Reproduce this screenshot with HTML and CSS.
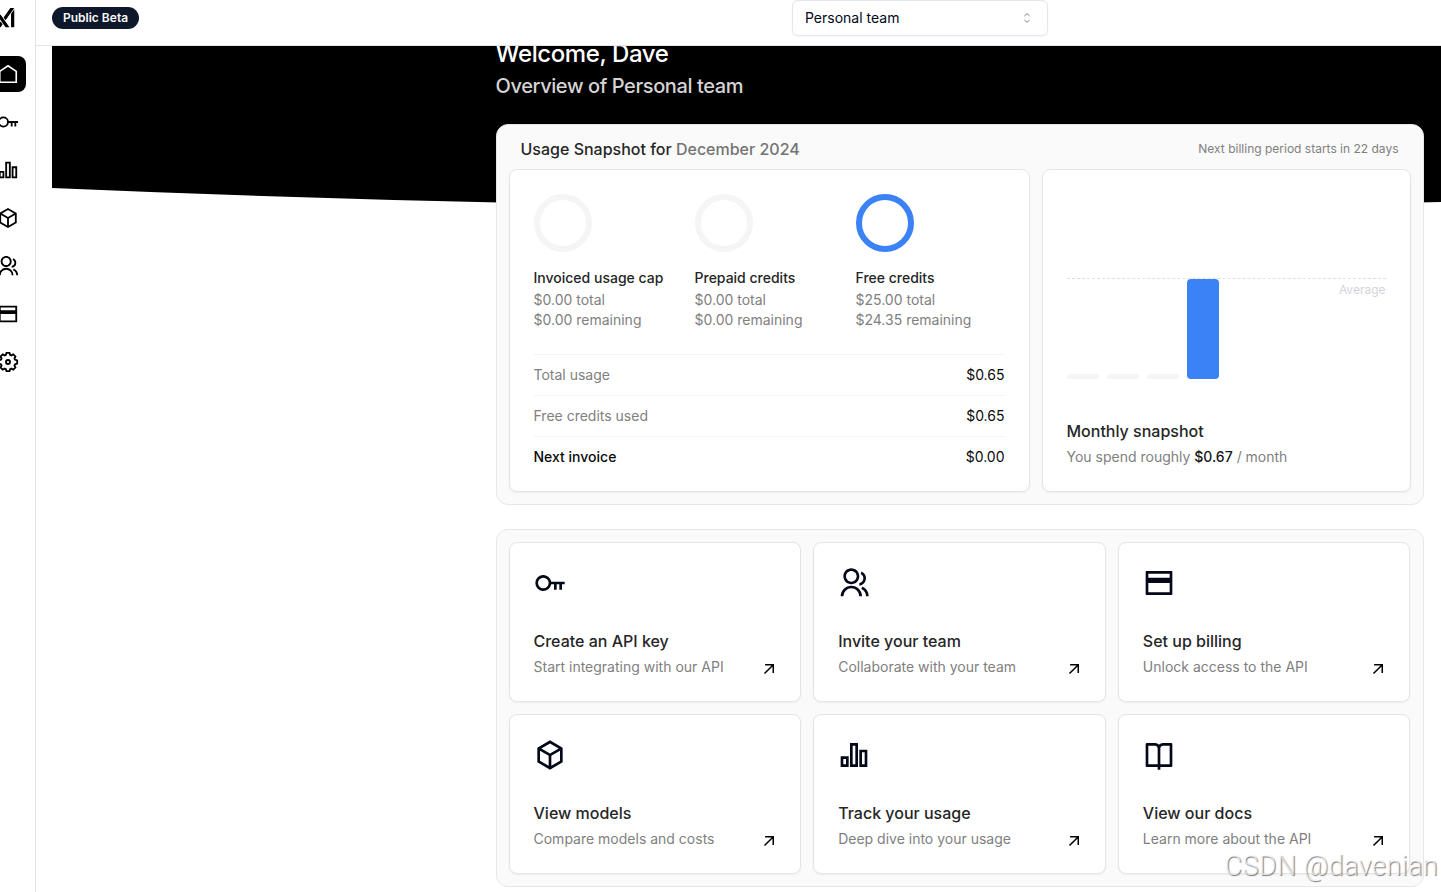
FILE: index.html
```html
<!DOCTYPE html>
<html lang="en">
<head>
  <meta charset="UTF-8">
  <meta name="viewport" content="width=device-width, initial-scale=1.0">
  <title>Console</title>
  <link rel="stylesheet" href="styles.css">
</head>
<body>
  <!-- Shared icons -->
  <svg class="icon-defs" width="0" height="0">
    <symbol id="i-home" viewBox="0 0 24 24"><path d="M12 3 21 9.2V21H3V9.2Z" fill="none" stroke="currentColor" stroke-width="1.8"/></symbol>
    <symbol id="i-key" viewBox="0 0 24 24"><path d="M12.917 13A6.002 6.002 0 0 1 1 12a6 6 0 0 1 11.917-1H23v2h-2v4h-2v-4h-2v4h-2v-4h-2.083ZM7 16a4 4 0 1 0 0-8 4 4 0 0 0 0 8Z"/></symbol>
    <symbol id="i-chart" viewBox="0 0 24 24"><path fill-rule="evenodd" d="M2 13H8V21H2V13ZM4 15V19H6V15H4ZM16 8H22V21H16V8ZM18 10V19H20V10H18ZM9 3H15V21H9V3ZM11 5V19H13V5H11Z"/></symbol>
    <symbol id="i-box" viewBox="0 0 24 24"><path fill-rule="evenodd" d="M12 1l9.5 5.5v11L12 23l-9.5-5.5v-11L12 1zM5.494 7.078L12 10.844l6.506-3.766L12 3.311 5.494 7.078zM4.5 8.813v7.534L11 20.11v-7.533L4.5 8.813zM13 20.11l6.5-3.763V8.813L13 12.577v7.533z"/></symbol>
    <symbol id="i-team" viewBox="0 0 24 24"><path d="M2 22a8 8 0 1 1 16 0h-2a6 6 0 1 0-12 0H2zm8-9c-3.315 0-6-2.685-6-6s2.685-6 6-6 6 2.685 6 6-2.685 6-6 6zm0-2c2.21 0 4-1.79 4-4s-1.79-4-4-4-4 1.79-4 4 1.79 4 4 4zm8.284 3.703A8.002 8.002 0 0 1 23 22h-2a6.001 6.001 0 0 0-3.537-5.473l.82-1.824zm-.688-11.29A5.5 5.5 0 0 1 21 8.5a5.499 5.499 0 0 1-5 5.478v-2.013a3.5 3.5 0 0 0 1.041-6.609l.555-1.943z"/></symbol>
    <symbol id="i-card" viewBox="0 0 24 24"><path fill-rule="evenodd" d="M2.6 3H21.4A.6.6 0 0 1 22 3.6V20.4A.6.6 0 0 1 21.4 21H2.6A.6.6 0 0 1 2 20.4V3.6A.6.6 0 0 1 2.6 3ZM20 12H4V19H20V12ZM20 8V5H4V8H20Z"/></symbol>
    <symbol id="i-gear" viewBox="0 0 24 24"><path d="M10.3 2h3.4l.6 2.3 1.4.6 2.1-1.3 2.4 2.5-1.2 2.1.6 1.3 2.4.8v3.4l-2.4.8-.6 1.3 1.2 2.1-2.4 2.5-2.1-1.3-1.4.6-.6 2.3h-3.4l-.6-2.3-1.4-.6-2.1 1.3-2.4-2.5L5 15.8l-.6-1.3-2.4-.8v-3.4l2.4-.8L5 8.2 3.8 6.1l2.4-2.5 2.1 1.3 1.4-.6Z" fill="none" stroke="currentColor" stroke-width="2" stroke-linejoin="round"/><circle cx="12" cy="12" r="2.2" fill="none" stroke="currentColor" stroke-width="2"/></symbol>
    <symbol id="i-book" viewBox="0 0 24 24"><path d="M13 21V23H11V21H3C2.44772 21 2 20.5523 2 20V4C2 3.44772 2.44772 3 3 3H9C10.1947 3 11.2671 3.52375 12 4.35418C12.7329 3.52375 13.8053 3 15 3H21C21.5523 3 22 3.44772 22 4V20C22 20.5523 21.5523 21 21 21H13ZM20 19V5H15C13.8954 5 13 5.89543 13 7V19H20ZM11 19V7C11 5.89543 10.1046 5 9 5H4V19H11Z"/></symbol>
    <symbol id="i-arrow" viewBox="0 0 24 24"><path d="M6.6 17.4 16.900 7.100M7.300 6.900H17.100V16.700" fill="none" stroke="currentColor" stroke-width="1.8"/></symbol>
  </svg>

  <nav class="sidebar">
    <svg class="logo" viewBox="0 0 24 24"><path d="M6.469 8.776 16.512 23h-4.464L2.005 8.776H6.47zm-.004 7.9 2.233 3.164L6.467 23H2l4.465-6.324zM22 2.582V23h-3.659V7.764L22 2.582zM22 1l-9.952 14.095-2.233-3.163L17.533 1H22z"/></svg>
    <a class="nav-item active"><svg><use href="#i-home"/></svg></a>
    <a class="nav-item"><svg><use href="#i-key"/></svg></a>
    <a class="nav-item"><svg><use href="#i-chart"/></svg></a>
    <a class="nav-item"><svg><use href="#i-box"/></svg></a>
    <a class="nav-item"><svg><use href="#i-team"/></svg></a>
    <a class="nav-item"><svg><use href="#i-card"/></svg></a>
    <a class="nav-item"><svg><use href="#i-gear"/></svg></a>
  </nav>

  <div class="page">
    <header class="topbar">
      <span class="badge">Public Beta</span>
      <button class="team-select">
        <span>Personal team</span>
        <svg viewBox="0 0 16 16"><path d="M5.4 6 8 3.7 10.6 6M5.4 10 8 12.3 10.6 10"/></svg>
      </button>
    </header>

    <main class="main">
      <svg class="hero-bg" viewBox="0 0 1816 162"><path d="M0 0H1816V142Q908 181.2 0 142Z"/></svg>

      <div class="content">
        <h1>Welcome, Dave</h1>
        <h2>Overview of Personal team</h2>

        <section class="panel usage">
          <div class="panel-head">
            <h3>Usage Snapshot for <span>December 2024</span></h3>
            <p>Next billing period starts in 22 days</p>
          </div>
          <div class="usage-cards">
            <div class="card credits">
              <div class="rings">
                <div>
                  <div class="ring"></div>
                  <h4>Invoiced usage cap</h4>
                  <p>$0.00 total</p>
                  <p>$0.00 remaining</p>
                </div>
                <div>
                  <div class="ring"></div>
                  <h4>Prepaid credits</h4>
                  <p>$0.00 total</p>
                  <p>$0.00 remaining</p>
                </div>
                <div>
                  <div class="ring full"></div>
                  <h4>Free credits</h4>
                  <p>$25.00 total</p>
                  <p>$24.35 remaining</p>
                </div>
              </div>
              <div class="row"><span>Total usage</span><span class="value">$0.65</span></div>
              <div class="row"><span>Free credits used</span><span class="value">$0.65</span></div>
              <div class="row"><b>Next invoice</b><span class="value">$0.00</span></div>
            </div>

            <div class="card monthly">
              <div class="average">Average</div>
              <div class="bars">
                <div class="bar empty"></div>
                <div class="bar empty"></div>
                <div class="bar empty"></div>
                <div class="bar" style="height: 100px"></div>
              </div>
              <h3>Monthly snapshot</h3>
              <p>You spend roughly <b>$0.67</b> / month</p>
            </div>
          </div>
        </section>

        <section class="panel links">
          <a class="card link">
            <svg class="icon"><use href="#i-key"/></svg>
            <h3>Create an API key</h3>
            <p>Start integrating with our API <svg class="arrow"><use href="#i-arrow"/></svg></p>
          </a>
          <a class="card link">
            <svg class="icon"><use href="#i-team"/></svg>
            <h3>Invite your team</h3>
            <p>Collaborate with your team <svg class="arrow"><use href="#i-arrow"/></svg></p>
          </a>
          <a class="card link">
            <svg class="icon"><use href="#i-card"/></svg>
            <h3>Set up billing</h3>
            <p>Unlock access to the API <svg class="arrow"><use href="#i-arrow"/></svg></p>
          </a>
          <a class="card link">
            <svg class="icon"><use href="#i-box"/></svg>
            <h3>View models</h3>
            <p>Compare models and costs <svg class="arrow"><use href="#i-arrow"/></svg></p>
          </a>
          <a class="card link">
            <svg class="icon"><use href="#i-chart"/></svg>
            <h3>Track your usage</h3>
            <p>Deep dive into your usage <svg class="arrow"><use href="#i-arrow"/></svg></p>
          </a>
          <a class="card link">
            <svg class="icon"><use href="#i-book"/></svg>
            <h3>View our docs</h3>
            <p>Learn more about the API <svg class="arrow"><use href="#i-arrow"/></svg></p>
          </a>
        </section>
      </div>
    </main>
  </div>

  <div class="watermark">CSDN @davenian</div>
</body>
</html>
```
FILE: styles.css
```css
* {
  box-sizing: border-box;
  margin: 0;
  padding: 0;
}

body {
  display: flex;
  height: 892px;
  overflow: hidden;
  position: relative;
  background: #fff;
  color: #020817;
  font-family: Inter, "Liberation Sans", sans-serif;
  font-size: 14px;
  line-height: 20px;
}

svg {
  display: block;
  fill: currentColor;
}

.icon-defs {
  position: absolute;
}

h1, h2, h3, h4, b {
  font-weight: 500;
}

/* Sidebar */
.sidebar {
  display: flex;
  flex-direction: column;
  align-items: flex-end;
  gap: 12px;
  flex: none;
  width: 36px;
  padding: 7px 9px 0 0;
  overflow: hidden;
  border-right: 1px solid #e5e5e5;
  color: #000;
}

.logo {
  flex: none;
  width: 21px;
  height: 21px;
  margin: 0 10px 16px 0;
}

.nav-item {
  display: flex;
  align-items: center;
  justify-content: center;
  flex: none;
  width: 36px;
  height: 36px;
  border-radius: 8px;
}

.nav-item svg {
  width: 22px;
  height: 22px;
}

.nav-item.active {
  background: #000;
  color: #fff;
}

/* Top bar */
.page {
  display: flex;
  flex-direction: column;
  flex: 1;
  min-width: 0;
}

.topbar {
  display: flex;
  align-items: flex-start;
  justify-content: space-between;
  flex: none;
  height: 46px;
  padding: 0 393px 0 16px;
  border-bottom: 1px solid #e5e5e5;
}

.badge {
  margin-top: 7px;
  padding: 3px 11px;
  border-radius: 11px;
  background: #0f172a;
  color: #f8fafc;
  font-size: 12px;
  font-weight: 600;
  line-height: 16px;
}

.team-select {
  display: flex;
  align-items: center;
  justify-content: space-between;
  width: 256px;
  height: 36px;
  padding: 0 12px;
  border: 1px solid #e2e8f0;
  border-radius: 6px;
  background: #fff;
  box-shadow: 0 1px 2px rgba(0, 0, 0, 0.05);
  color: #020817;
  font: inherit;
}

.team-select svg {
  width: 16px;
  height: 16px;
  fill: none;
  stroke: #808080;
}

/* Main area */
.main {
  position: relative;
  flex: 1;
  padding-left: 16px;
  overflow: hidden;
}

.hero-bg {
  position: absolute;
  top: 0;
  left: 16px;
  width: 1816px;
  height: 162px;
  fill: #000;
}

.content {
  position: relative;
  width: 928px;
  margin: -8px 0 0 443.5px;
}

h1 {
  color: #fff;
  font-size: 24px;
  letter-spacing: -0.4px;
  line-height: 32px;
}

h2 {
  margin: 2px 0 24px;
  color: #d4d4d4;
  font-size: 20px;
  letter-spacing: -0.4px;
  line-height: 28px;
}

.panel {
  padding: 12px;
  border: 1px solid #e5e7eb;
  border-radius: 12px;
  background: #fafafa;
}

.panel h3 {
  color: #262626;
  font-size: 16px;
  line-height: 24px;
}

.panel p {
  color: #808080;
}

.card {
  border: 1px solid #e5e5e5;
  border-radius: 8px;
  background: #fff;
  box-shadow: 0 1px 2px rgba(0, 0, 0, 0.05);
  padding: 24px;
}

/* Usage snapshot */
.usage {
  height: 381px;
  padding-top: 0;
  margin-bottom: 24px;
}

.panel-head {
  display: flex;
  align-items: center;
  justify-content: space-between;
  height: 44px;
  padding: 4px 12px 0;
}

.panel-head h3 span {
  color: #737373;
}

.panel-head p {
  font-size: 12px;
}

.usage-cards {
  display: flex;
  gap: 12px;
  height: 323px;
}

.credits {
  width: 521px;
}

.monthly {
  flex: 1;
}

.rings {
  display: grid;
  grid-template-columns: repeat(3, 1fr);
  gap: 12px;
  height: 160px;
}

.rings h4 {
  margin-bottom: 2px;
  color: #262626;
  font-size: 14px;
  white-space: nowrap;
}

.ring {
  width: 58px;
  height: 58px;
  margin-bottom: 16px;
  border: 6px solid #f5f5f5;
  border-radius: 50%;
}

.ring.full {
  border-color: #3b82f6;
}

.row {
  display: flex;
  justify-content: space-between;
  padding: 10px 0;
  border-top: 1px solid #f3f3f3;
  color: #808080;
}

.row b,
.row .value {
  color: #0a0a0a;
}

.average {
  height: 1px;
  margin-top: 84px;
  border-top: 1px dashed #e0e0e0;
  color: #d4d4d8;
  font-size: 12px;
  line-height: 22px;
  text-align: right;
}

.bars {
  display: flex;
  align-items: flex-end;
  gap: 8px;
  height: 100px;
  margin-bottom: 40px;
}

.bar {
  width: 32px;
  border-radius: 4px;
  background: #3b82f6;
}

.bar.empty {
  height: 5px;
  background: #f5f5f5;
}

.monthly p b {
  color: #171717;
}

.monthly p,
.link p {
  margin-top: 4px;
}

/* Quick links */
.links {
  display: grid;
  grid-template-columns: repeat(3, 1fr);
  grid-auto-rows: 160px;
  gap: 12px;
}

.link .icon {
  width: 32px;
  height: 32px;
  margin-bottom: 30px;
}

.link p {
  display: flex;
  justify-content: space-between;
}

.link .arrow {
  width: 20px;
  height: 20px;
  margin: 1.5px -3px -1.5px 0;
  color: #000;
}

.watermark {
  position: absolute;
  right: 3px;
  bottom: 8px;
  color: rgba(255, 255, 255, 0.7);
  font-family: Roboto, "Liberation Sans", sans-serif;
  font-size: 27px;
  font-weight: 300;
  letter-spacing: 0.4px;
  line-height: 36px;
  text-shadow: 1px 1px 1px rgba(0, 0, 0, 0.5);
}
```
